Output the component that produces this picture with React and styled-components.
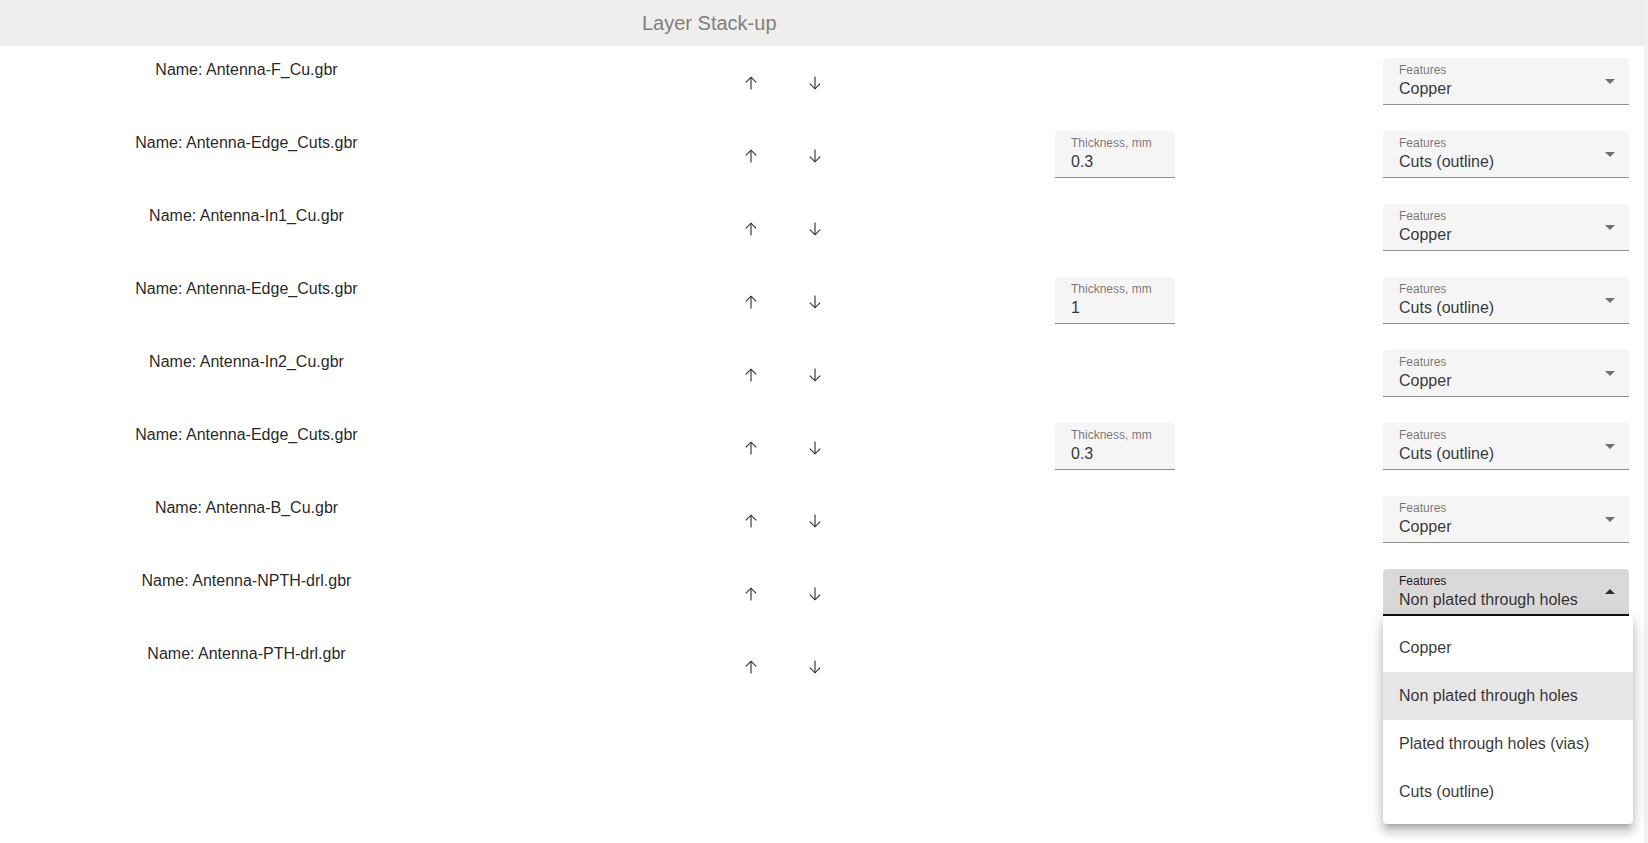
import React from 'react';
import styled, { createGlobalStyle, css } from 'styled-components';

const GlobalStyle = createGlobalStyle`
  html, body {
    margin: 0;
    padding: 0;
    background: #fff;
    font-family: "Liberation Sans", Arial, sans-serif;
  }
`;

// the last row's select sits under the open menu, so it is not drawn
const layers = [
  { name: 'Antenna-F_Cu.gbr', feature: 'Copper' },
  { name: 'Antenna-Edge_Cuts.gbr', feature: 'Cuts (outline)', thickness: '0.3' },
  { name: 'Antenna-In1_Cu.gbr', feature: 'Copper' },
  { name: 'Antenna-Edge_Cuts.gbr', feature: 'Cuts (outline)', thickness: '1' },
  { name: 'Antenna-In2_Cu.gbr', feature: 'Copper' },
  { name: 'Antenna-Edge_Cuts.gbr', feature: 'Cuts (outline)', thickness: '0.3' },
  { name: 'Antenna-B_Cu.gbr', feature: 'Copper' },
  { name: 'Antenna-NPTH-drl.gbr', feature: 'Non plated through holes', open: true },
  { name: 'Antenna-PTH-drl.gbr', feature: null },
];

const options = [
  'Copper',
  'Non plated through holes',
  'Plated through holes (vias)',
  'Cuts (outline)',
];

const Page = styled.div`
  display: flex;
  min-height: 100vh;
`;

const Main = styled.main`
  flex: 1;
  display: flex;
  flex-direction: column;
`;

const ScrollTrack = styled.div`
  width: 4px;
  background: #f1f1f1;
`;

const Header = styled.header`
  height: 46px;
  display: flex;
  align-items: center;
  padding-left: 642px;
  background: #efeeec;
  color: #7f7f7f;
  font-size: 20px;
`;

const Row = styled.div`
  display: grid;
  grid-template-columns: 493px 226px 128px 208px 120px 208px 246px;
  align-items: start;
  height: 73px;
`;

const Name = styled.div`
  grid-column: 1;
  padding-top: 12px;
  text-align: center;
  font-size: 16px;
  line-height: 24px;
  color: rgba(0, 0, 0, 0.87);
`;

const Arrows = styled.div`
  grid-column: 3;
  align-self: center;
  display: flex;
`;

const ArrowButton = styled.button`
  width: 64px;
  height: 36px;
  display: flex;
  align-items: center;
  justify-content: center;
  padding: 0;
  border: 0;
  background: transparent;
  color: #2a2a2a;
  cursor: pointer;
`;

const Field = styled.div`
  grid-column: ${({ $col }) => $col};
  position: relative;
  margin-top: 12px;
  height: 47px;
  box-sizing: border-box;
  padding: 5px 16px 0;
  border-radius: 4px 4px 0 0;
  background: ${({ $focused }) => ($focused ? '#d9d9d9' : '#f5f5f5')};
  border-bottom: 1px solid rgba(0, 0, 0, 0.42);
  ${({ $focused }) => $focused && css`
    border-bottom: 2px solid #111;
  `}
`;

const Label = styled.div`
  height: 14px;
  font-size: 12px;
  line-height: 14px;
  color: ${({ $focused }) => ($focused ? '#221a1a' : 'rgba(0, 0, 0, 0.54)')};
`;

const Value = styled.div`
  margin-top: 2px;
  font-size: 16px;
  line-height: 19px;
  color: rgba(0, 0, 0, 0.8);
  white-space: nowrap;
`;

const Caret = styled.svg`
  position: absolute;
  right: 7px;
  top: 11px;
  width: 24px;
  height: 24px;
  fill: rgba(0, 0, 0, 0.54);
  ${({ $up }) => $up && css`fill: rgba(0, 0, 0, 0.8);`}
`;

const Menu = styled.ul`
  position: absolute;
  z-index: 10;
  top: 47px;
  left: 0;
  width: 250px;
  margin: 0;
  padding: 8px 0;
  list-style: none;
  background: #fff;
  border-radius: 4px;
  box-shadow: 0px 5px 5px -3px rgba(0, 0, 0, 0.2),
    0px 8px 10px 1px rgba(0, 0, 0, 0.14),
    0px 3px 14px 2px rgba(0, 0, 0, 0.12);
`;

const MenuItem = styled.li`
  height: 48px;
  display: flex;
  align-items: center;
  padding: 0 16px;
  font-size: 16px;
  color: rgba(0, 0, 0, 0.8);
  background: ${({ $selected }) => ($selected ? '#e6e6e6' : 'transparent')};
`;

const UpIcon = () => (
  <svg width="12" height="14" viewBox="0 0 12 14" fill="none" stroke="currentColor" strokeWidth="1.1">
    <path d="M6 1.2V13.5" />
    <path d="M0.8 6.4L6 1.2L11.2 6.4" />
  </svg>
);

const DownIcon = () => (
  <svg width="12" height="14" viewBox="0 0 12 14" fill="none" stroke="currentColor" strokeWidth="1.1">
    <path d="M6 0.5V12.8" />
    <path d="M0.8 7.6L6 12.8L11.2 7.6" />
  </svg>
);

const FeatureSelect = ({ value, open }) => (
  <Field $col={7} $focused={open}>
    <Label $focused={open}>Features</Label>
    <Value>{value}</Value>
    <Caret viewBox="0 0 24 24" $up={open}>
      {open ? <path d="M7 14l5-5 5 5z" /> : <path d="M7 10l5 5 5-5z" />}
    </Caret>
    {open && (
      <Menu>
        {options.map((o) => (
          <MenuItem key={o} $selected={o === value}>{o}</MenuItem>
        ))}
      </Menu>
    )}
  </Field>
);

const LayerRow = ({ layer }) => (
  <Row>
    <Name>Name: {layer.name}</Name>
    <Arrows>
      <ArrowButton aria-label="move up"><UpIcon /></ArrowButton>
      <ArrowButton aria-label="move down"><DownIcon /></ArrowButton>
    </Arrows>
    {layer.thickness && (
      <Field $col={5}>
        <Label>Thickness, mm</Label>
        <Value>{layer.thickness}</Value>
      </Field>
    )}
    {layer.feature && <FeatureSelect value={layer.feature} open={layer.open} />}
  </Row>
);

export default function App() {
  return (
    <Page>
      <GlobalStyle />
      <Main>
        <Header>Layer Stack-up</Header>
        {layers.map((l, i) => (
          <LayerRow key={i} layer={l} />
        ))}
      </Main>
      <ScrollTrack />
    </Page>
  );
}
